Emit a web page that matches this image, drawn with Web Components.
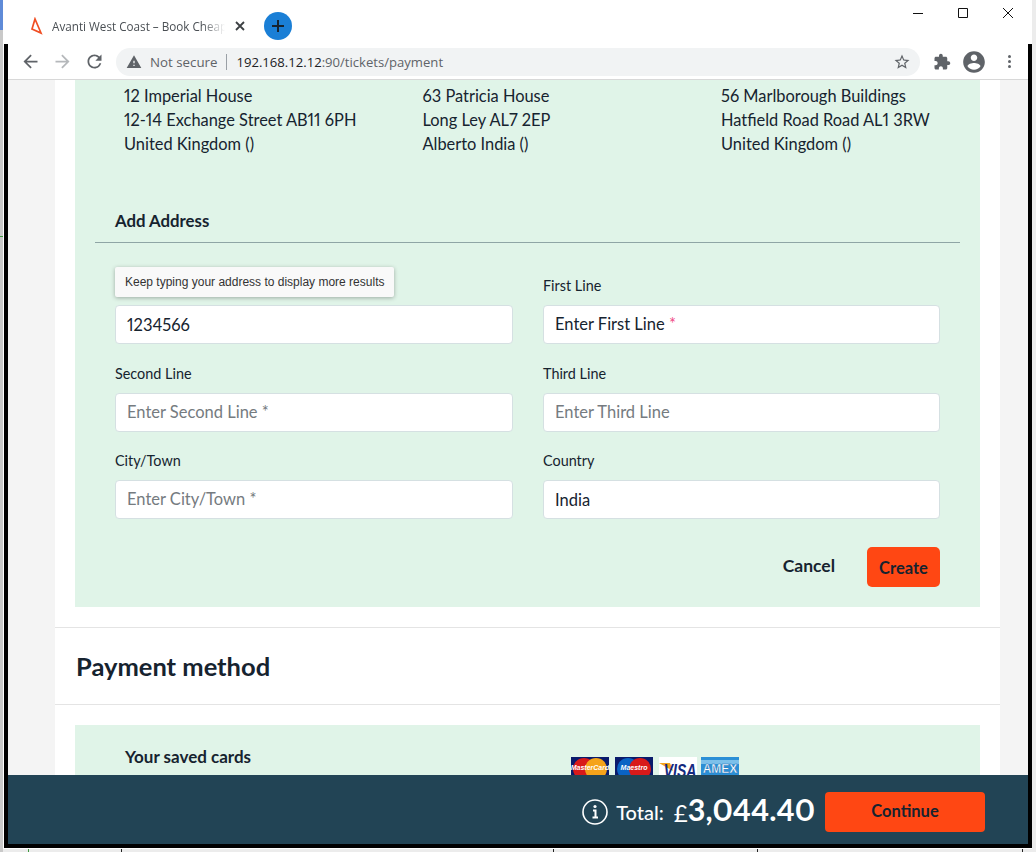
<!DOCTYPE html>
<html lang="en">
    <head>
        <meta charset="UTF-8" />
        <title>Avanti West Coast</title>
        <style>
            html, body {
                margin: 0;
                height: 852px;
                overflow: hidden;
                background: #ececec;
            }
        </style>
    </head>
    <body>
        <browser-window>
            <address-list></address-list>
            <add-address></add-address>
            <payment-method></payment-method>
        </browser-window>

        <script type="module">
            const icons = {
                back: 'M20 11H7.83l5.59-5.59L12 4l-8 8 8 8 1.41-1.41L7.83 13H20v-2z',
                forward: 'M12 4l-1.41 1.41L16.17 11H4v2h12.17l-5.58 5.59L12 20l8-8z',
                reload: 'M17.65 6.35A7.958 7.958 0 0 0 12 4c-4.42 0-7.99 3.58-7.99 8s3.57 8 7.99 8c3.73 0 6.84-2.55 7.73-6h-2.08A5.99 5.99 0 0 1 12 18c-3.31 0-6-2.69-6-6s2.69-6 6-6c1.66 0 3.14.69 4.22 1.78L13 11h7V4l-2.35 2.35z',
                warning: 'M1 21h22L12 2 1 21zm12-3h-2v-2h2v2zm0-4h-2v-4h2v4z',
                star: 'M22 9.24l-7.19-.62L12 2 9.19 8.63 2 9.24l5.46 4.73L5.82 21 12 17.27 18.18 21l-1.63-7.03L22 9.24zM12 15.4l-3.76 2.27 1-4.28-3.32-2.88 4.38-.38L12 6.1l1.71 4.04 4.38.38-3.32 2.88 1 4.28L12 15.4z',
                puzzle: 'M20.5 11H19V7c0-1.1-.9-2-2-2h-4V3.5C13 2.12 11.88 1 10.5 1S8 2.12 8 3.5V5H4c-1.1 0-1.99.9-1.99 2v3.8H3.5c1.49 0 2.7 1.21 2.7 2.7s-1.21 2.7-2.7 2.7H2V20c0 1.1.9 2 2 2h3.8v-1.5c0-1.49 1.21-2.7 2.7-2.7 1.49 0 2.7 1.21 2.7 2.7V22H17c1.1 0 2-.9 2-2v-4h1.5c1.38 0 2.5-1.12 2.5-2.5S21.88 11 20.5 11z',
                account: 'M12 2C6.48 2 2 6.48 2 12s4.48 10 10 10 10-4.48 10-10S17.52 2 12 2zm0 3c1.66 0 3 1.34 3 3s-1.34 3-3 3-3-1.34-3-3 1.34-3 3-3zm0 14.2c-2.5 0-4.71-1.28-6-3.22.03-1.99 4-3.08 6-3.08 1.99 0 5.97 1.09 6 3.08-1.29 1.94-3.5 3.22-6 3.22z',
            };

            const icon = (name, size, color) =>
                `<svg width="${size}" height="${size}" viewBox="0 0 24 24" fill="${color}"><path d="${icons[name]}"/></svg>`;

            class BrowserWindow extends HTMLElement {
                constructor() {
                    super();
                    this.attachShadow({ mode: 'open' });
                    this.shadowRoot.innerHTML = `
                        <style>
                            :host {
                                display: block;
                                position: relative;
                                height: 852px;
                                font-family: Lato, sans-serif;
                                font-variant-numeric: proportional-nums;
                                color: #16232f;
                            }
                            .side {
                                position: absolute;
                                left: 0;
                                top: 0;
                                width: 3px;
                                height: 852px;
                                background: linear-gradient(#5f8bd8 0 30px, #c9c9c9 30px);
                            }
                            .side i {
                                position: absolute;
                                left: 0;
                                top: 236px;
                                width: 3px;
                                height: 1px;
                                background: #3f9a3f;
                            }
                            .tick {
                                position: absolute;
                                top: 849px;
                                width: 1px;
                                height: 3px;
                                background: #222;
                            }
                            .win {
                                position: absolute;
                                left: 3px;
                                top: 0;
                                width: 1029px;
                                height: 849px;
                                background: #fff;
                            }
                            .title {
                                display: flex;
                                align-items: center;
                                height: 44px;
                                padding: 8px 0 0 27px;
                                box-sizing: border-box;
                            }
                            .tab-title {
                                width: 173px;
                                margin-left: 8px;
                                font: 11.7px/16px "Open Sans", sans-serif;
                                color: #4a4f54;
                                white-space: nowrap;
                                -webkit-mask-image: linear-gradient(90deg, #000 150px, transparent 173px);
                                mask-image: linear-gradient(90deg, #000 150px, transparent 173px);
                            }
                            .tab-x { margin-left: 10px; display: block; }
                            .new {
                                display: flex;
                                align-items: center;
                                justify-content: center;
                                width: 28px;
                                height: 28px;
                                margin-left: 19px;
                                border-radius: 50%;
                                background: #1a7fd6;
                            }
                            .caption {
                                display: flex;
                                align-items: center;
                                margin: -8px 19px 0 auto;
                                height: 26px;
                                align-self: flex-start;
                            }
                            .caption svg { display: block; margin-left: 35px; }
                            .frame {
                                margin-left: 1px;
                                height: 800px;
                                box-sizing: content-box;
                                border: 4px solid #000;
                                border-top: 0;
                                display: flex;
                                flex-direction: column;
                            }
                            .bar {
                                flex: none;
                                display: flex;
                                align-items: center;
                                height: 36px;
                                box-sizing: border-box;
                                border-bottom: 1px solid #d8d8d8;
                                background: #fff;
                                padding-left: 12px;
                            }
                            .bar svg { display: block; flex: none; }
                            .nav { width: 32px; display: flex; justify-content: flex-start; }
                            .omni {
                                display: flex;
                                align-items: center;
                                width: 804px;
                                height: 28px;
                                border-radius: 14px;
                                background: #f1f3f4;
                                padding-left: 10px;
                                box-sizing: border-box;
                                font: 13.1px/28px "Open Sans", sans-serif;
                                white-space: nowrap;
                            }
                            .omni .ns { color: #5f6368; margin-left: 8px; font-size: 13.3px; }
                            .omni .sep { width: 1px; height: 16px; background: #9aa0a6; margin: 0 9px; }
                            .omni .host { color: #202124; }
                            .omni .path { color: #5f6368; }
                            .omni svg:last-child { margin-left: auto; margin-right: 9px; }
                            .tools { display: flex; align-items: center; margin-left: 13px; }
                            .dots { display: flex; flex-direction: column; gap: 2px; margin-left: 21px; }
                            .dots i { width: 3px; height: 3px; border-radius: 50%; background: #5f6368; }
                            .view {
                                flex: 1;
                                min-height: 0;
                                overflow: hidden;
                                background: #f4f4f4;
                                padding: 0 28px 0 47px;
                            }
                            .page { background: #fff; height: 100%; overflow: hidden; }
                            order-footer { flex: none; }
                        </style>
                        <div class="side"><i></i></div>
                        <div class="tick" style="left:28px;background:#3f9a3f"></div>
                        <div class="tick" style="left:121px"></div>
                        <div class="tick" style="left:553px"></div>
                        <div class="tick" style="left:757px"></div>
                        <div class="tick" style="left:1022px"></div>
                        <div class="win">
                            <div class="title">
                                <svg width="14" height="18" viewBox="0 0 14 18" fill="none" stroke="#f04e23" stroke-width="1.7"><path d="M5 2 2 12l9 4z"/></svg>
                                <div class="tab-title">Avanti West Coast – Book Cheap</div>
                                <svg class="tab-x" width="10" height="10" viewBox="0 0 10 10" stroke="#3c4043" stroke-width="1.8"><path d="M1 1l8 8M9 1l-8 8"/></svg>
                                <div class="new">
                                    <svg width="14" height="14" viewBox="0 0 14 14" stroke="#16232f" stroke-width="2"><path d="M7 1v12M1 7h12"/></svg>
                                </div>
                                <div class="caption">
                                    <svg width="10" height="10" viewBox="0 0 10 10" stroke="#111"><path d="M0 5.5h10"/></svg>
                                    <svg width="10" height="10" viewBox="0 0 10 10" fill="none" stroke="#111"><path d="M.5.5h9v9h-9z"/></svg>
                                    <svg width="10" height="10" viewBox="0 0 10 10" stroke="#111"><path d="M0 0l10 10M10 0L0 10"/></svg>
                                </div>
                            </div>
                            <div class="frame">
                                <div class="bar">
                                    <div class="nav">${icon('back', 21, '#5f6368')}</div>
                                    <div class="nav">${icon('forward', 21, '#b5b8bb')}</div>
                                    <div class="nav">${icon('reload', 21, '#5f6368')}</div>
                                    <div class="omni">
                                        ${icon('warning', 16, '#5f6368')}
                                        <span class="ns">Not secure</span>
                                        <span class="sep"></span>
                                        <span><span class="host">192.168.12.12</span><span class="path">:90/tickets/payment</span></span>
                                        ${icon('star', 18, '#5f6368')}
                                    </div>
                                    <div class="tools">
                                        ${icon('puzzle', 18, '#5f6368')}
                                        <span style="width:10px"></span>
                                        ${icon('account', 26, '#5f6368')}
                                        <div class="dots"><i></i><i></i><i></i></div>
                                    </div>
                                </div>
                                <div class="view"><div class="page"><slot></slot></div></div>
                                <order-footer></order-footer>
                            </div>
                        </div>
                    `;
                }
            }

            class AddressList extends HTMLElement {
                constructor() {
                    super();
                    this.attachShadow({ mode: 'open' });
                    this.shadowRoot.innerHTML = `
                        <style>
                            :host {
                                display: grid;
                                grid-template-columns: repeat(3, 298.5px);
                                margin: 0 20px;
                                padding: 4px 0 0 49px;
                                background: #e0f4e8;
                                font-size: 16.4px;
                                line-height: 24px;
                            }
                            p { margin: 0; }
                        </style>
                        <p>12 Imperial House<br />12-14 Exchange Street AB11 6PH<br />United Kingdom ()</p>
                        <p>63 Patricia House<br />Long Ley AL7 2EP<br />Alberto India ()</p>
                        <p>56 Marlborough Buildings<br />Hatfield Road Road AL1 3RW<br />United Kingdom ()</p>
                    `;
                }
            }

            class FormField extends HTMLElement {
                constructor() {
                    super();
                    this.attachShadow({ mode: 'open' });
                    const hint = this.getAttribute('hint');
                    const filled = this.hasAttribute('filled');
                    const value = this.hasAttribute('value');
                    this.shadowRoot.innerHTML = `
                        <style>
                            :host { display: block; position: relative; }
                            label {
                                display: block;
                                height: 20px;
                                margin-bottom: 9px;
                                font-size: 14.4px;
                                line-height: 20px;
                            }
                            .box {
                                height: 39px;
                                box-sizing: border-box;
                                padding: 0 11px;
                                border: 1px solid #d5e0e2;
                                border-radius: 4px;
                                background: #fff;
                                font-size: 16.5px;
                                line-height: ${value ? 39 : 37}px;
                                white-space: nowrap;
                                color: ${filled || value ? '#16232f' : '#757b80'};
                            }
                            .hint {
                                position: absolute;
                                left: 0;
                                top: -9px;
                                width: 279px;
                                height: 30px;
                                box-sizing: border-box;
                                padding-left: 10px;
                                border-radius: 2px;
                                background: #f9f9f9;
                                box-shadow: 0 1px 4px rgba(0, 0, 0, 0.3);
                                font: 12px/30px "Liberation Sans", sans-serif;
                                color: #333;
                                white-space: nowrap;
                            }
                        </style>
                        <label>${this.getAttribute('label') || '&nbsp;'}</label>
                        <div class="box"><slot></slot></div>
                        ${hint ? `<div class="hint">${hint}</div>` : ''}
                    `;
                }
            }

            class AddAddress extends HTMLElement {
                constructor() {
                    super();
                    this.attachShadow({ mode: 'open' });
                    this.shadowRoot.innerHTML = `
                        <style>
                            :host {
                                display: block;
                                margin: 0 20px;
                                padding-bottom: 20px;
                                background: #e0f4e8;
                            }
                            h3 {
                                margin: 0;
                                padding: 53px 0 9px 40px;
                                font-size: 16.8px;
                                font-weight: 700;
                                line-height: 24px;
                            }
                            hr {
                                height: 1px;
                                margin: 0 20px 33px;
                                border: 0;
                                background: #8fa5a5;
                            }
                            .grid {
                                display: grid;
                                grid-template-columns: 398px 397px;
                                column-gap: 30px;
                                row-gap: 19.5px;
                                padding: 0 40px;
                            }
                            .actions {
                                display: flex;
                                justify-content: flex-end;
                                align-items: center;
                                margin: 28px 40px 0;
                                font-size: 16.5px;
                                font-weight: 700;
                            }
                            .cancel { margin: -3px 32px 0 0; font-size: 17.5px; }
                            .create {
                                width: 73px;
                                height: 40px;
                                line-height: 42px;
                                text-align: center;
                                border-radius: 5px;
                                background: #ff4713;
                            }
                        </style>
                        <h3>Add Address</h3>
                        <hr />
                        <div class="grid">
                            <form-field value hint="Keep typing your address to display more results">1234566</form-field>
                            <form-field filled label="First Line">Enter First Line <span style="color:#f0508a">*</span></form-field>
                            <form-field label="Second Line">Enter Second Line *</form-field>
                            <form-field label="Third Line">Enter Third Line</form-field>
                            <form-field label="City/Town">Enter City/Town *</form-field>
                            <form-field value label="Country">India</form-field>
                        </div>
                        <div class="actions">
                            <span class="cancel">Cancel</span>
                            <span class="create">Create</span>
                        </div>
                    `;
                }
            }

            class CardLogos extends HTMLElement {
                constructor() {
                    super();
                    this.attachShadow({ mode: 'open' });
                    this.shadowRoot.innerHTML = `
                        <style>
                            :host { display: flex; gap: 6px; }
                            svg { display: block; }
                            text { font-family: "Liberation Sans", sans-serif; font-weight: 700; }
                        </style>
                        <svg width="38" height="24" viewBox="0 0 38 24">
                            <rect width="38" height="24" fill="#0a1a6b" />
                            <circle cx="13" cy="12" r="11" fill="#d81a1a" />
                            <circle cx="25" cy="12" r="11" fill="#f5a31a" />
                            <text x="19" y="13" text-anchor="middle" font-size="7" font-style="italic" fill="#fff">MasterCard</text>
                        </svg>
                        <svg width="38" height="24" viewBox="0 0 38 24">
                            <rect width="38" height="24" fill="#0a1a6b" />
                            <circle cx="13" cy="12" r="11" fill="#0a63c4" />
                            <circle cx="25" cy="12" r="11" fill="#d81a1a" />
                            <text x="19" y="13" text-anchor="middle" font-size="7" font-style="italic" fill="#fff">Maestro</text>
                        </svg>
                        <svg width="38" height="24" viewBox="0 0 38 24">
                            <rect width="38" height="24" fill="#fff" />
                            <path d="M0 6h11l3 8z" fill="#f5a31a" />
                            <text x="21" y="16" text-anchor="middle" font-size="14" font-style="italic" fill="#14297f" transform="scale(1 1.25)">VISA</text>
                        </svg>
                        <svg width="38" height="24" viewBox="0 0 38 24" style="margin-left:-2px">
                            <rect width="38" height="24" fill="#2b8fd6" />
                            <rect y="3" width="38" height="4" fill="#7cc0ea" />
                            <text x="19" y="15.5" text-anchor="middle" font-size="12" fill="#fff" stroke="#1c6fb5" stroke-width=".4">AMEX</text>
                        </svg>
                    `;
                }
            }

            class PaymentMethod extends HTMLElement {
                constructor() {
                    super();
                    this.attachShadow({ mode: 'open' });
                    this.shadowRoot.innerHTML = `
                        <style>
                            :host { display: block; margin-top: 20px; }
                            h2 {
                                margin: 0;
                                height: 76px;
                                padding-left: 21px;
                                border-top: 1px solid #e4e4e4;
                                border-bottom: 1px solid #e4e4e4;
                                font-size: 25.5px;
                                font-weight: 700;
                                line-height: 76px;
                            }
                            .saved {
                                display: flex;
                                margin: 20px 20px 0;
                                height: 90px;
                                background: #e0f4e8;
                                padding: 21px 0 0 50px;
                            }
                            .saved b { font-size: 17px; line-height: 22px; width: 446px; }
                            card-logos { margin-top: 11px; }
                        </style>
                        <h2>Payment method</h2>
                        <div class="saved">
                            <b>Your saved cards</b>
                            <card-logos></card-logos>
                        </div>
                    `;
                }
            }

            class OrderFooter extends HTMLElement {
                constructor() {
                    super();
                    this.attachShadow({ mode: 'open' });
                    this.shadowRoot.innerHTML = `
                        <style>
                            :host {
                                display: flex;
                                align-items: center;
                                justify-content: flex-end;
                                height: 69px;
                                box-sizing: border-box;
                                padding: 5px 40px 0 0;
                                background: #224455;
                                color: #fff;
                            }
                            svg { display: block; }
                            .total { margin-left: 8px; font-size: 20px; font-weight: 500; }
                            .pound { margin-left: 10px; font-size: 24px; }
                            .price { margin-bottom: 6px; font-size: 30.5px; font-weight: 700; line-height: 36px; }
                            .go {
                                width: 160px;
                                height: 40px;
                                margin: 0 3px 0 10px;
                                border-radius: 4px;
                                background: #ff4713;
                                color: #16232f;
                                font-size: 16.5px;
                                font-weight: 700;
                                line-height: 39px;
                                text-align: center;
                            }
                        </style>
                        <svg width="26" height="26" viewBox="0 0 26 26" fill="none" stroke="#fff">
                            <circle cx="13" cy="13" r="12" stroke-width="1.6" />
                            <path d="M11 11.5h2.5v7M10.5 18.5h5.5" stroke-width="2" />
                            <circle cx="13" cy="7.5" r="1.6" fill="#fff" stroke="none" />
                        </svg>
                        <span class="total">Total:</span>
                        <span class="pound">£</span>
                        <span class="price">3,044.40</span>
                        <span class="go">Continue</span>
                    `;
                }
            }

            // children first so the parents can use them straight away
            customElements.define('form-field', FormField);
            customElements.define('card-logos', CardLogos);
            customElements.define('order-footer', OrderFooter);
            customElements.define('address-list', AddressList);
            customElements.define('add-address', AddAddress);
            customElements.define('payment-method', PaymentMethod);
            customElements.define('browser-window', BrowserWindow);
        </script>
    </body>
</html>
